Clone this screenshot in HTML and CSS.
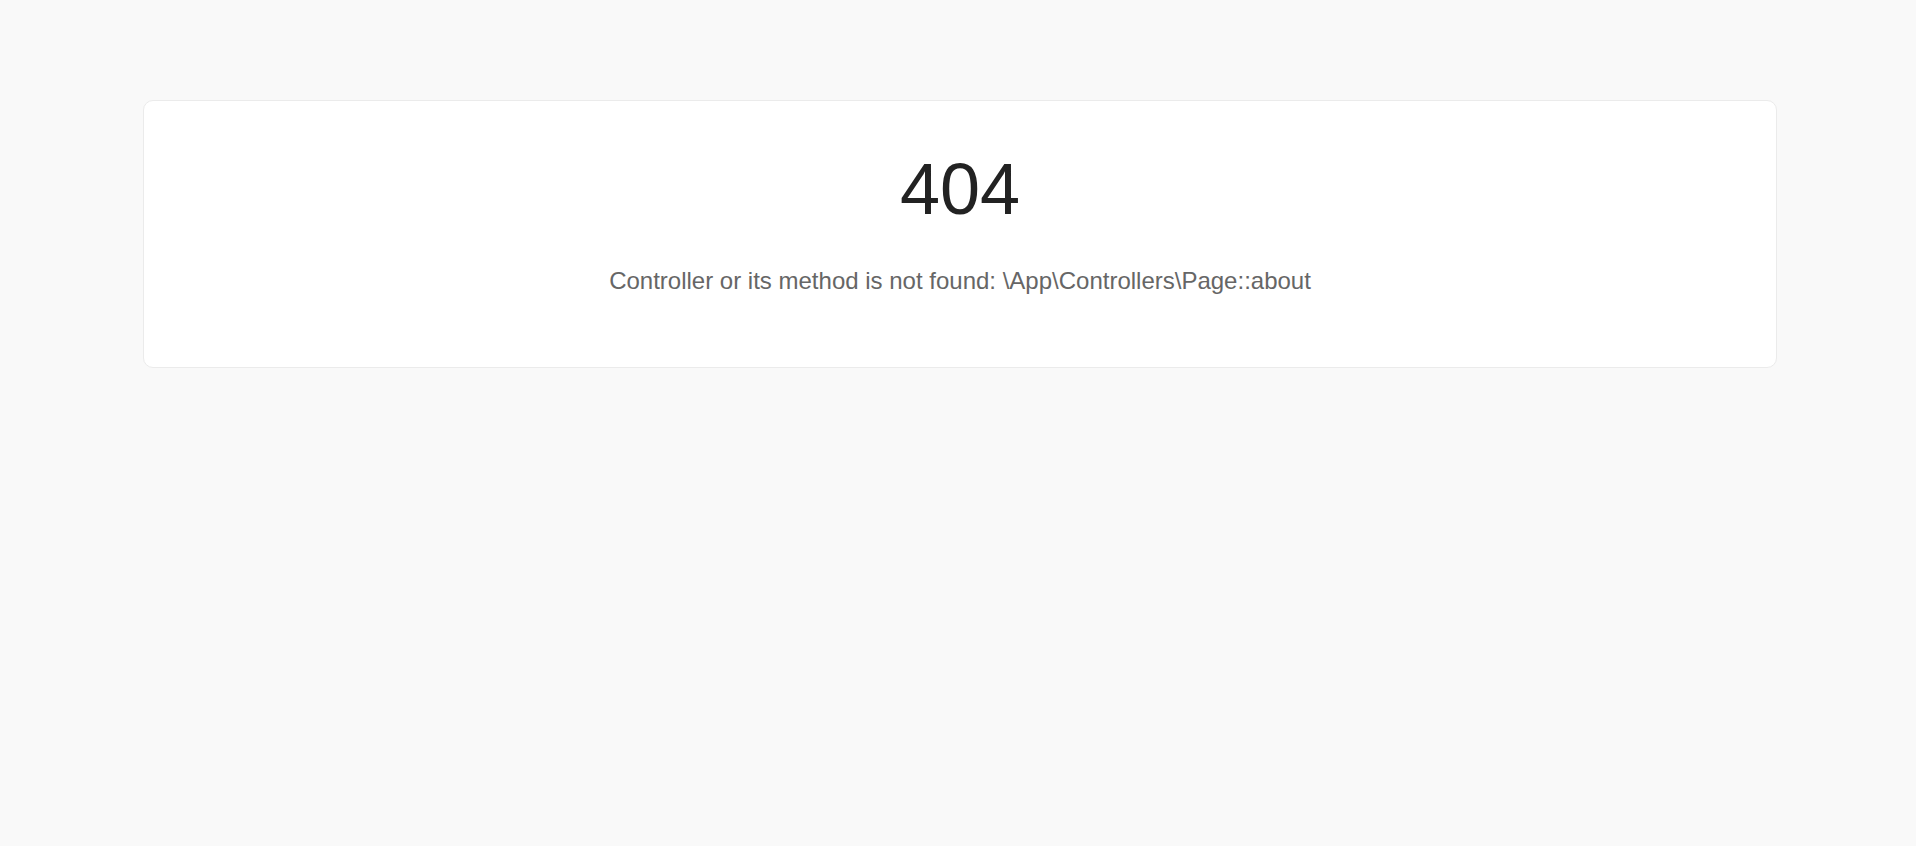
FILE: index.html
```html
<!DOCTYPE html>
<html lang="en">
<head>
<meta charset="utf-8">
<title>404</title>
<link rel="stylesheet" href="styles.css">
</head>
<body>
<main class="card">
  <h1 class="code">404</h1>
  <p class="message">Controller or its method is not found: \App\Controllers\Page::about</p>
</main>
</body>
</html>
```

FILE: styles.css
```css
html, body {
  margin: 0;
  padding: 0;
}
body {
  background: #f9f9f9;
  font-family: "Liberation Sans", Arial, sans-serif;
  padding: 100px 0 0 143px;
}
.card {
  box-sizing: border-box;
  width: 1634px;
  background: #fff;
  border: 1px solid #ebebeb;
  border-radius: 10px;
  padding: 45px 20px 68px;
  text-align: center;
}
.code {
  margin: 0;
  font-size: 72px;
  font-weight: normal;
  color: #222;
  line-height: 1.2;
}
.message {
  margin: 31px 0 0;
  font-size: 24px;
  color: #666;
  line-height: 1.5;
}
```
